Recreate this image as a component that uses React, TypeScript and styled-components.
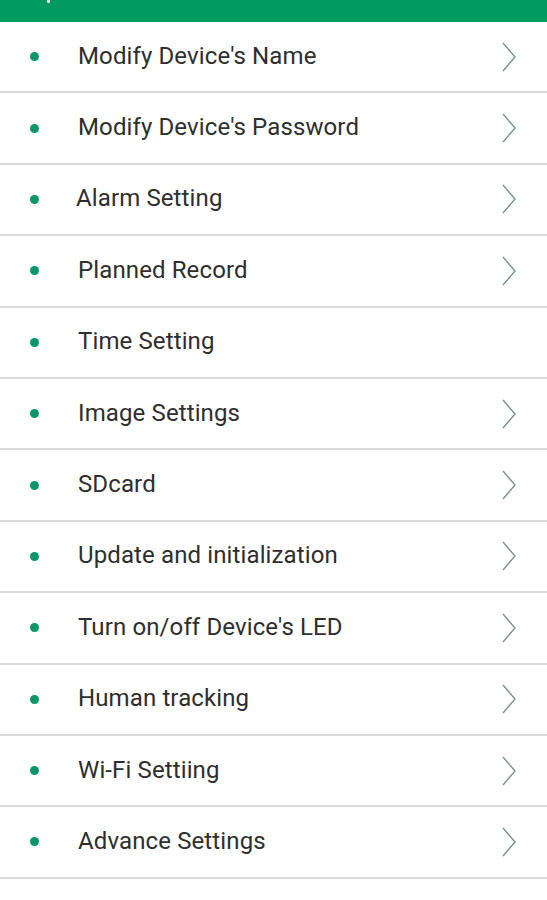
import React from "react";
import styled, { createGlobalStyle } from "styled-components";

const Global = createGlobalStyle`
  html, body { margin: 0; padding: 0; background: #ffffff; }
  body { font-family: Roboto, "Noto Sans", Arial, sans-serif; }
`;

const Page = styled.div`
  width: 547px;
  display: flex;
  flex-direction: column;
  background: #ffffff;
`;

const TopBar = styled.div`
  height: 22px;
  background: #029b5f;
  position: relative;
`;

const BackStub = styled.div`
  position: absolute;
  left: 47px;
  top: 0;
  width: 3px;
  height: 3px;
  border-radius: 0 0 2px 2px;
  background: #ffffff;
`;

const List = styled.ul`
  list-style: none;
  margin: 0;
  padding: 0;
  display: flex;
  flex-direction: column;
`;

const Row = styled.li`
  height: 69.4px;
  border-bottom: 2px solid #dadada;
  display: flex;
  align-items: center;
  padding: 0 30px 0 30px;
`;

const Dot = styled.span`
  width: 9px;
  height: 9px;
  border-radius: 50%;
  background: #0b966a;
  flex: none;
`;

const Label = styled.span<{ $shift: number }>`
  margin-left: ${(p) => 39 + p.$shift}px;
  flex: 1;
  font-size: 24px;
  color: #2e2e2e;
  line-height: 1;
  letter-spacing: 0.12px;
  padding-bottom: 2px;
`;

const Chevron = styled.svg`
  width: 16px;
  height: 30px;
  flex: none;
`;

const items: { label: string; arrow: boolean; shift?: number }[] = [
  { label: "Modify Device's Name", arrow: true },
  { label: "Modify Device's Password", arrow: true },
  { label: "Alarm Setting", arrow: true, shift: -2 },
  { label: "Planned Record", arrow: true },
  { label: "Time Setting", arrow: false },
  { label: "Image Settings", arrow: true },
  { label: "SDcard", arrow: true },
  { label: "Update and initialization", arrow: true },
  { label: "Turn on/off Device's LED", arrow: true },
  { label: "Human tracking", arrow: true },
  { label: "Wi-Fi Settiing", arrow: true },
  { label: "Advance Settings", arrow: true },
];

export default function App() {
  return (
    <Page>
      <Global />
      <TopBar>
        <BackStub />
      </TopBar>
      <List>
        {items.map((it) => (
          <Row key={it.label}>
            <Dot />
            <Label $shift={it.shift ?? 0}>{it.label}</Label>
            {it.arrow && (
              <Chevron viewBox="0 0 16 30">
                <polyline
                  points="2,1 14,15 2,29"
                  fill="none"
                  stroke="#7f928c"
                  strokeWidth="1.4"
                />
              </Chevron>
            )}
          </Row>
        ))}
      </List>
    </Page>
  );
}
